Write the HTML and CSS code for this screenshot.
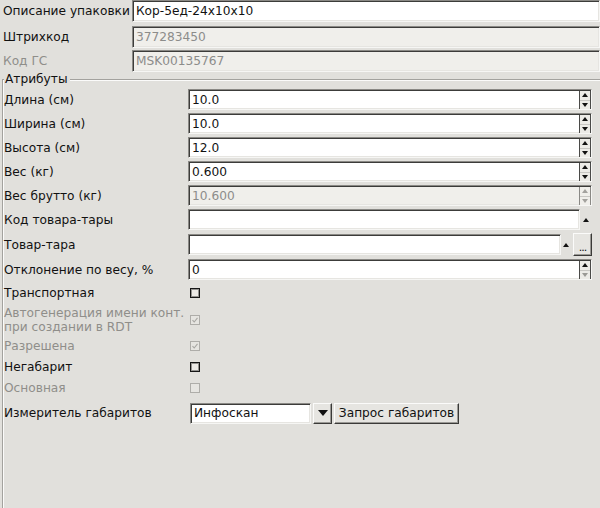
FILE: index.html
```html
<!DOCTYPE html>
<html>
<head>
<meta charset="utf-8">
<link rel="stylesheet" href="styles.css">
</head>
<body>
<div class="page">
  <div class="trow r1">
    <div class="tlbl">Описание упаковки</div>
    <div class="tinp sunken">Кор-5ед-24x10x10</div>
  </div>
  <div class="trow r2">
    <div class="tlbl">Штрихкод</div>
    <div class="tinp sunken dis">377283450</div>
  </div>
  <div class="trow r3">
    <div class="tlbl grey">Код ГС</div>
    <div class="tinp sunken dis">MSK00135767</div>
  </div>

  <div class="group">
    <div class="gtitle"><span>Атрибуты</span></div>

    <div class="row">
      <div class="lbl">Длина (см)</div>
      <div class="spinbox sunken"><div class="val">10.0</div><div class="spin"><i class="up"></i><i class="dn"></i></div></div>
    </div>
    <div class="row">
      <div class="lbl">Ширина (см)</div>
      <div class="spinbox sunken"><div class="val">10.0</div><div class="spin"><i class="up"></i><i class="dn"></i></div></div>
    </div>
    <div class="row">
      <div class="lbl">Высота (см)</div>
      <div class="spinbox sunken"><div class="val">12.0</div><div class="spin"><i class="up"></i><i class="dn"></i></div></div>
    </div>
    <div class="row">
      <div class="lbl">Вес (кг)</div>
      <div class="spinbox sunken"><div class="val">0.600</div><div class="spin"><i class="up"></i><i class="dn"></i></div></div>
    </div>
    <div class="row">
      <div class="lbl">Вес брутто (кг)</div>
      <div class="spinbox sunken dis"><div class="val">10.600</div><div class="spin"><i class="up"></i><i class="dn"></i></div></div>
    </div>
    <div class="row">
      <div class="lbl">Код товара-тары</div>
      <div class="lookup sunken wide"></div>
      <div class="arrowcell w12"><i class="up"></i></div>
    </div>
    <div class="row r-btn">
      <div class="lbl">Товар-тара</div>
      <div class="lookup sunken narrow"></div>
      <div class="arrowcell w10"><i class="up"></i></div>
      <div class="dots raised">...</div>
    </div>
    <div class="row r-gap2">
      <div class="lbl">Отклонение по весу, %</div>
      <div class="spinbox sunken"><div class="val">0</div><div class="spin"><i class="up"></i><i class="dn dim"></i></div></div>
    </div>
    <div class="row chk r-gap3">
      <div class="lbl">Транспортная</div>
      <div class="cb"></div>
    </div>
    <div class="row chk r-two">
      <div class="lbl grey two">Автогенерация имени конт.<br>при создании в RDT</div>
      <div class="cb dis"><svg viewBox="0 0 8 8" width="8" height="8"><polyline points="1.5,4.2 3.2,6 6.5,1.8" fill="none" stroke="#a8a7a3" stroke-width="1.1"/></svg></div>
    </div>
    <div class="row chk">
      <div class="lbl grey">Разрешена</div>
      <div class="cb dis"><svg viewBox="0 0 8 8" width="8" height="8"><polyline points="1.5,4.2 3.2,6 6.5,1.8" fill="none" stroke="#a8a7a3" stroke-width="1.1"/></svg></div>
    </div>
    <div class="row chk">
      <div class="lbl">Негабарит</div>
      <div class="cb"></div>
    </div>
    <div class="row chk r-gap4">
      <div class="lbl grey">Основная</div>
      <div class="cb dis"></div>
    </div>
    <div class="row r-combo">
      <div class="lbl">Измеритель габаритов</div>
      <div class="combo sunken">Инфоскан</div>
      <div class="cbtn raised"><i class="dn"></i></div>
      <div class="btn raised">Запрос габаритов</div>
    </div>
  </div>
</div>
</body>
</html>
```

FILE: styles.css
```css
html, body {
  margin: 0;
  padding: 0;
}
body {
  background: #e1e0dc;
  font-family: "DejaVu Sans", sans-serif;
  font-size: 12.2px;
  color: #111;
  width: 600px;
  height: 508px;
  overflow: hidden;
}
.page {
  width: 600px;
  height: 508px;
}
.sunken {
  box-sizing: border-box;
  border: 1px solid;
  border-color: #8a8985 #f6f6f4 #f6f6f4 #8a8985;
  box-shadow: inset 1px 1px 0 #3c3c3a, inset -1px -1px 0 #e6e5e1;
  background: #fff;
}
.sunken.dis {
  background: #f0efeb;
  color: #8c8c8a;
}
.raised {
  box-sizing: border-box;
  border: 1px solid;
  border-color: #fbfbfa #3a3a38 #3a3a38 #fbfbfa;
  box-shadow: inset -1px -1px 0 #9a9995;
  background: #e6e5e1;
}
.grey {
  color: #8f8e8a;
}

/* top rows */
.trow {
  display: flex;
  align-items: center;
  height: 22px;
}
.r1 { margin-bottom: 4px; }
.r2 { margin-bottom: 2px; }
.tlbl {
  width: 133px;
  box-sizing: border-box;
  padding-left: 3px;
  white-space: nowrap;
}
.tinp {
  width: 472px;
  height: 22px;
  line-height: 20px;
  padding-left: 3px;
  white-space: nowrap;
}

/* group box */
.group {
  margin-top: 7px;
  margin-left: 2px;
  height: 440px;
  border-top: 1px solid #a3a29e;
  border-left: 1px solid #a3a29e;
  box-shadow: inset 1px 1px 0 #fbfbfa;
  padding-left: 1px;
}
.gtitle {
  height: 15px;
  line-height: 15px;
  margin-top: -8px;
  margin-bottom: 2px;
}
.gtitle span {
  background: #e1e0dc;
  padding: 0 2px 0 1px;
}
.row {
  display: flex;
  align-items: center;
  height: 21px;
  margin-bottom: 3px;
}
.row.chk { margin-bottom: 0; }
.r-btn { height: 23px; }
.r-gap2 { margin-bottom: 2px; }
.row.r-gap3 { margin-bottom: 3px; }
.row.r-two { height: 28px; margin-bottom: 1px; }
.row.r-gap4 { margin-bottom: 4px; }
.r-combo { height: 22px; }
.lbl {
  width: 184px;
  white-space: nowrap;
}
.lbl.two {
  line-height: 14px;
  white-space: nowrap;
}

.spinbox {
  display: flex;
  width: 404px;
  height: 21px;
  padding: 2px 0 1px 2px;
}
.spinbox .val {
  flex: 1;
  line-height: 17px;
  padding-left: 1px;
}
.spin {
  width: 10px;
  display: flex;
  flex-direction: column;
  border-left: 1px solid #4a4a48;
  border-right: 1px solid #4a4a48;
  background: #ecebe7;
  margin-top: -1px;
  margin-bottom: -1px;
}
.spin i {
  flex: 1;
  display: flex;
  align-items: center;
  justify-content: center;
}
i.up::before, i.dn::before {
  content: "";
  width: 0;
  height: 0;
  border-left: 3px solid transparent;
  border-right: 3px solid transparent;
}
i.up::before { border-bottom: 4px solid #111; }
i.dn::before { border-top: 4px solid #111; }
.spin i.up { border-bottom: 1px solid #c8c7c3; }
i.dn.dim::before { border-top-color: #9a9995; }
.dis .spin i.up::before { border-bottom-color: #a3a29e; }
.dis .spin i.dn::before { border-top-color: #a3a29e; }
.dis .spin { background: #f0efeb; border-color: #8a8985; }

.lookup {
  height: 21px;
}
.lookup.wide { width: 392px; }
.lookup.narrow { width: 373px; }
.arrowcell {
  display: flex;
  align-items: center;
  justify-content: center;
  height: 21px;
}
.arrowcell i { display: flex; }
.w12 { width: 12px; }
.w10 { width: 10px; margin-right: 2px; }
.dots {
  width: 19px;
  height: 23px;
  line-height: 23px;
  text-align: center;
  font-size: 11px;
  letter-spacing: -1px;
  padding-top: 2px;
}

.cb {
  box-sizing: border-box;
  width: 10px;
  height: 10px;
  margin-left: 2px;
  border: 1px solid #151515;
  box-shadow: inset 0 0 0 1px rgba(40, 40, 38, 0.45);
  background: #eceae6;
  display: flex;
  align-items: center;
  justify-content: center;
}
.cb.dis {
  border: 1px solid #aeada9;
  box-shadow: none;
  background: #e6e5e1;
}
.cb svg { display: block; }

.combo {
  width: 121px;
  height: 21px;
  line-height: 19px;
  margin-left: 2px;
  padding-left: 3px;
}
.cbtn {
  width: 19px;
  height: 21px;
  margin-left: 2px;
  display: flex;
  align-items: center;
  justify-content: center;
}
.cbtn i { display: flex; }
.cbtn i.dn::before {
  border-left-width: 5px;
  border-right-width: 5px;
  border-top-width: 6px;
}
.btn {
  width: 125px;
  height: 21px;
  line-height: 19px;
  margin-left: 2px;
  text-align: center;
  white-space: nowrap;
}
```
